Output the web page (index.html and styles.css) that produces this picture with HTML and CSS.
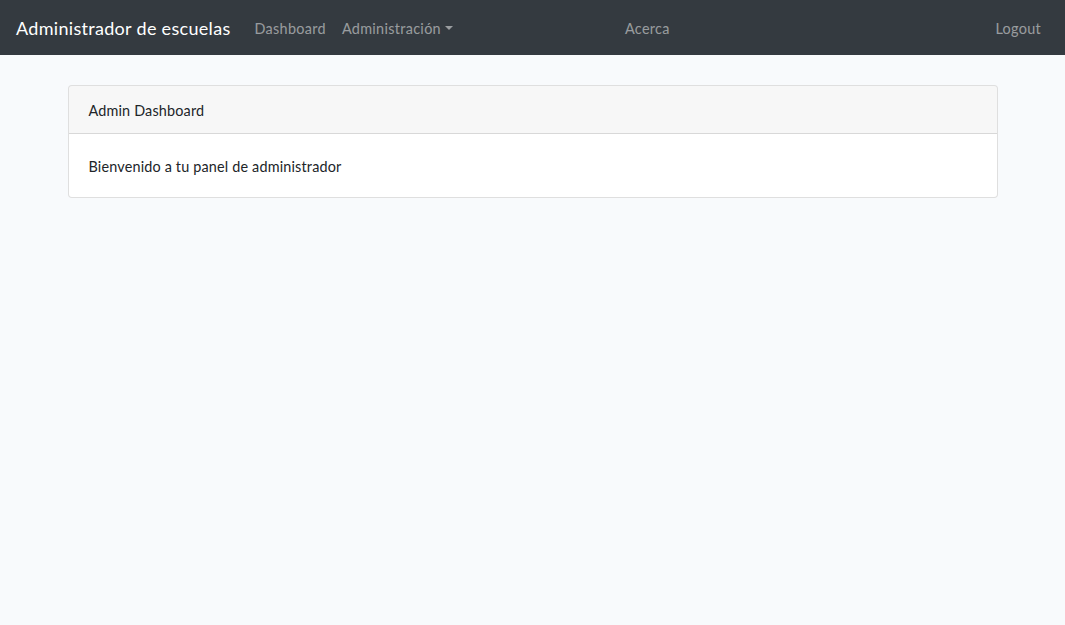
FILE: index.html
```html
<!DOCTYPE html>
<html lang="es">
<head>
<meta charset="utf-8">
<title>Administrador de escuelas</title>
<link rel="stylesheet" href="styles.css">
</head>
<body>
<nav class="navbar">
  <a class="brand" href="#">Administrador de escuelas</a>
  <ul class="nav nav-left">
    <li><a class="nav-link" href="#">Dashboard</a></li>
    <li><a class="nav-link dropdown-toggle" href="#">Administración</a></li>
  </ul>
  <ul class="nav nav-center">
    <li><a class="nav-link" href="#">Acerca</a></li>
  </ul>
  <ul class="nav nav-right">
    <li><a class="nav-link" href="#">Logout</a></li>
  </ul>
</nav>
<main class="main">
  <div class="container">
    <div class="card">
      <div class="card-header">Admin Dashboard</div>
      <div class="card-body">Bienvenido a tu panel de administrador</div>
    </div>
  </div>
</main>
</body>
</html>
```
FILE: styles.css
```css
* { box-sizing: border-box; }
html, body { margin: 0; padding: 0; }
body {
  font-family: "Lato", "Open Sans", sans-serif;
  font-size: 14.4px;
  line-height: 1.6;
  letter-spacing: 0.012em;
  color: #212529;
  background: #f8fafc;
  min-height: 625px;
}
a { text-decoration: none; }
.navbar {
  display: flex;
  align-items: center;
  background: #343a40;
  padding: 9px 16px 7px;
  height: 55px;
}
.brand {
  color: #fff;
  font-size: 18px;
  line-height: 28.8px;
  padding: 5px 0;
  margin-right: 16px;
  white-space: nowrap;
  letter-spacing: 0.017em;
}
.nav {
  display: flex;
  list-style: none;
  margin: 0;
  padding: 0;
}
.nav-link {
  display: block;
  padding: 8px 8px;
  color: rgba(255,255,255,.5);
  white-space: nowrap;
  letter-spacing: 0.022em;
}
.dropdown-toggle::after {
  content: "";
  display: inline-block;
  margin-left: .28em;
  vertical-align: .255em;
  border-top: .3em solid;
  border-right: .3em solid transparent;
  border-left: .3em solid transparent;
  border-bottom: 0;
}
.nav-center { margin-left: 156px; }
.nav-right { margin-left: auto; }
.main { padding: 30px 0; }
.container {
  width: 960px;
  margin: 0 auto;
  padding: 0 15px;
}
.card {
  background: #fff;
  border: 1px solid rgba(0,0,0,.125);
  border-radius: 4px;
}
.card-header {
  padding: 13px 20px 11px;
  background: rgba(0,0,0,.03);
  border-bottom: 1px solid rgba(0,0,0,.125);
  border-radius: 3px 3px 0 0;
}
.card-body {
  padding: 21px 20px 19px;
}
```
